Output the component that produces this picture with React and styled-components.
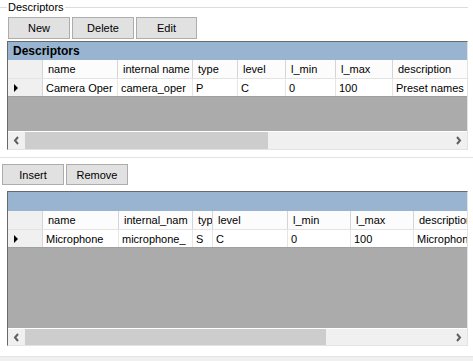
import React from "react";
import styled, { createGlobalStyle } from "styled-components";

const Global = createGlobalStyle`
  html, body { margin: 0; padding: 0; background: #ffffff; }
  body { font-family: "Liberation Sans", Arial, sans-serif; font-size: 11px; color: #000; }
`;

const Page = styled.div`
  width: 473px;
  height: 361px;
  overflow: hidden;
  display: flex;
  flex-direction: column;
  background: #ffffff;
`;

const Legend = styled.div`
  height: 14px;
  flex-shrink: 0;
  display: flex;
  align-items: center;
  &::before {
    content: "";
    width: 7px;
    height: 1px;
    background: #dcdcdc;
  }
  &::after {
    content: "";
    width: 403px;
    height: 1px;
    background: #dcdcdc;
  }
`;

const LegendText = styled.span`
  padding: 0 1px;
  line-height: 14px;
  white-space: nowrap;
`;

const ButtonBar = styled.div`
  display: flex;
  flex-shrink: 0;
  gap: ${(p) => p.$gap}px;
  margin-top: ${(p) => p.$top}px;
  padding-left: ${(p) => p.$left}px;
`;

const Button = styled.div`
  box-sizing: border-box;
  width: ${(p) => p.$w}px;
  height: ${(p) => p.$h}px;
  background: #e1e1e1;
  border: 1px solid #adadad;
  display: flex;
  align-items: center;
  justify-content: center;
  font-size: 11px;
`;

const Grid = styled.div`
  box-sizing: border-box;
  flex-shrink: 0;
  margin-top: ${(p) => p.$top}px;
  margin-left: 7px;
  width: 461px;
  height: ${(p) => p.$h}px;
  border-top: 1px solid #696969;
  border-left: 1px solid #696969;
  border-right: 1px solid #e3e3e3;
  border-bottom: 1px solid #e3e3e3;
  display: flex;
  flex-direction: column;
  background: #ababab;
  overflow: hidden;
`;

const Caption = styled.div`
  height: ${(p) => p.$h}px;
  background: #99b4d1;
  font-weight: bold;
  font-size: 12px;
  display: flex;
  align-items: center;
  padding-left: 5px;
  flex-shrink: 0;
`;

const Row = styled.div`
  display: grid;
  grid-template-columns: ${(p) => p.$cols};
  height: ${(p) => p.$h}px;
  flex-shrink: 0;
  background: ${(p) => (p.$header ? "#fcfcfc" : "#ffffff")};
  border-bottom: 1px solid ${(p) => (p.$header ? "#e3e3e3" : "#a0a0a0")};
  box-sizing: border-box;
  overflow: hidden;
`;

const Cell = styled.div`
  overflow: hidden;
  white-space: nowrap;
  display: flex;
  align-items: center;
  padding-left: ${(p) => (p.$header ? 5 : 3)}px;
  border-right: 1px solid ${(p) => (p.$header ? "#d5d5d5" : "#e6e6e6")};
  min-width: 0;
`;

const RowHead = styled.div`
  background: #f0f0f0;
  border-right: 1px solid #d5d5d5;
  display: flex;
  align-items: center;
  padding-left: 6px;
`;

const Arrow = styled.span`
  width: 0;
  height: 0;
  border-top: 4px solid transparent;
  border-bottom: 4px solid transparent;
  border-left: 4px solid #000;
`;

const Fill = styled.div`
  flex: 1;
  background: #ababab;
`;

const ScrollBar = styled.div`
  height: ${(p) => p.$h}px;
  flex-shrink: 0;
  display: flex;
  background: #f0f0f0;
  border-top: 1px solid #ffffff;
`;

const ScrollBtn = styled.div`
  width: 17px;
  display: flex;
  align-items: center;
  justify-content: center;
  flex-shrink: 0;
`;

const Track = styled.div`
  flex: 1;
  display: flex;
`;

const Thumb = styled.div`
  width: ${(p) => p.$w}px;
  background: #cdcdcd;
`;

const Separator = styled.div`
  height: 1px;
  background: #e3e3e3;
  margin-top: ${(p) => p.$top}px;
  flex-shrink: 0;
`;

const Footer = styled.div`
  flex: 1;
  background: #f0f0f0;
`;

const Chevron = ({ dir }) => (
  <svg width="7" height="9" viewBox="0 0 7 9">
    <path
      d={dir === "left" ? "M5 1 L2 4.5 L5 8" : "M2 1 L5 4.5 L2 8"}
      fill="none"
      stroke="#606060"
      strokeWidth="2"
    />
  </svg>
);

function DataGrid({ top, height, caption, captionH, headerH, cols, headers, row, scrollH, thumbW }) {
  return (
    <Grid $top={top} $h={height}>
      <Caption $h={captionH}>{caption}</Caption>
      <Row $cols={cols} $h={headerH} $header>
        <RowHead />
        {headers.map((h, i) => (
          <Cell key={i} $header>
            {h}
          </Cell>
        ))}
      </Row>
      <Row $cols={cols} $h={18}>
        <RowHead>
          <Arrow />
        </RowHead>
        {row.map((v, i) => (
          <Cell key={i}>{v}</Cell>
        ))}
      </Row>
      <Fill />
      <ScrollBar $h={scrollH}>
        <ScrollBtn>
          <Chevron dir="left" />
        </ScrollBtn>
        <Track>
          <Thumb $w={thumbW} />
        </Track>
        <ScrollBtn>
          <Chevron dir="right" />
        </ScrollBtn>
      </ScrollBar>
    </Grid>
  );
}

export default function App() {
  return (
    <>
      <Global />
      <Page>
        <Legend>
          <LegendText>Descriptors</LegendText>
        </Legend>
        <ButtonBar $top={3} $left={8} $gap={2}>
          <Button $w={62} $h={22}>New</Button>
          <Button $w={62} $h={22}>Delete</Button>
          <Button $w={61} $h={22}>Edit</Button>
        </ButtonBar>
        <DataGrid
          top={2}
          height={109}
          caption="Descriptors"
          captionH={18}
          headerH={19}
          cols="35px 75px 75px 45px 48px 50px 57px 80px"
          headers={["name", "internal name", "type", "level", "l_min", "l_max", "description"]}
          row={["Camera Oper", "camera_oper", "P", "C", "0", "100", "Preset names"]}
          scrollH={17}
          thumbW={243}
        />
        <Separator $top={7} />
        <ButtonBar $top={6} $left={2} $gap={2}>
          <Button $w={62} $h={21}>Insert</Button>
          <Button $w={62} $h={21}>Remove</Button>
        </ButtonBar>
        <DataGrid
          top={6}
          height={155}
          caption=""
          captionH={19}
          headerH={19}
          cols="35px 76px 74px 20px 75px 63px 63px 80px"
          headers={["name", "internal_nam", "typ", "level", "l_min", "l_max", "description"]}
          row={["Microphone", "microphone_", "S", "C", "0", "100", "Microphone"]}
          scrollH={16}
          thumbW={301}
        />
        <Separator $top={10} />
        <Footer />
      </Page>
    </>
  );
}
